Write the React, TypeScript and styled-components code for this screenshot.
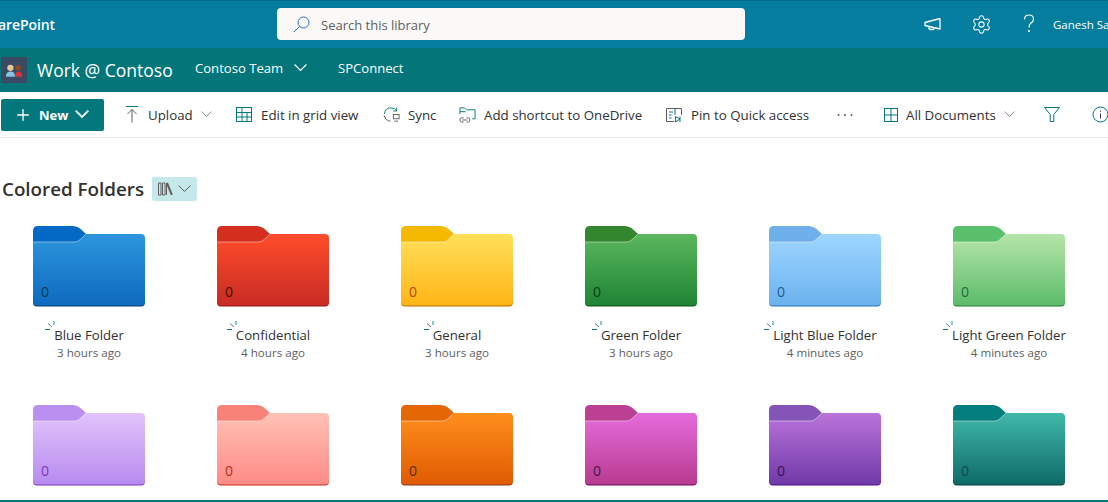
import React from "react";
import styled, { createGlobalStyle } from "styled-components";
import { Plus, Settings } from "lucide-react";

const GlobalStyle = createGlobalStyle`
  html, body {
    margin: 0;
    padding: 0;
    overflow: hidden;
    background: white;
    font-family: "Open Sans", "Noto Sans", "Liberation Sans", sans-serif;
  }
  * { box-sizing: border-box; }
`;

const Page = styled.div`
  display: flex;
  flex-direction: column;
  width: 1108px;
  height: 502px;
  overflow: hidden;
`;
const SuiteBar = styled.header`
  display: flex;
  align-items: center;
  flex: none;
  height: 48px;
  padding-bottom: 1px;
  border-top: 1px solid #086c88;
  background-color: #047d9f;
  color: white;
`;
const Brand = styled.div`
  display: flex;
  justify-content: flex-end;
  flex: none;
  width: 55px;
  overflow: hidden;
  font-size: 14px;
  font-weight: 600;
  letter-spacing: -0.1px;
`;
const SearchBox = styled.div`
  display: flex;
  align-items: center;
  gap: 11px;
  flex: none;
  width: 468px;
  height: 32px;
  margin-left: 222px;
  padding: 1px 0 0 16px;
  border-radius: 4px;
  background-color: #faf9f8;
  color: #605e5c;
  font-size: 13px;
`;
const SuiteActions = styled.div`
  display: grid;
  grid-template-columns: 48px 48px 48px auto;
  justify-items: center;
  align-items: center;
  margin-left: 164px;
  white-space: nowrap;
`;
const UserName = styled.span`
  justify-self: start;
  font-size: 11.5px;
`;
const SiteHeader = styled.nav`
  display: flex;
  align-items: center;
  flex: none;
  height: 44px;
  padding-left: 1px;
  background-color: #04767a;
  color: white;
`;
const SiteLogo = styled.div`
  display: flex;
  justify-content: center;
  align-items: center;
  width: 26px;
  height: 26px;
  background-color: #3a4a62;
`;
const SiteTitle = styled.div`
  margin-left: 10px;
  width: 158px;
  font-size: 17.5px;
  white-space: nowrap;
`;
const NavLink = styled.div<{ $width: number }>`
  display: flex;
  align-items: center;
  gap: 11px;
  width: ${(props) => props.$width}px;
  margin-top: -4px;
  font-size: 13.1px;
  white-space: nowrap;
`;
const CommandBar = styled.div`
  display: grid;
  grid-template-columns: 114px 113px 147px 76px 207px 171px 46px 161px 48px 40px;
  align-items: center;
  flex: none;
  height: 46px;
  padding-left: 1px;
  border-bottom: 1px solid #edebe9;
  background-color: white;
`;
const NewButton = styled.div`
  display: flex;
  align-items: center;
  width: 103px;
  height: 32px;
  padding-left: 13px;
  border-radius: 2px;
  background-color: #03787c;
  color: white;
  font-size: 13px;
  font-weight: 700;
`;
const NewLabel = styled.span`
  margin: 0 7px 0 7px;
`;
const CommandItem = styled.div`
  display: flex;
  align-items: center;
  gap: 8px;
  padding-left: 8px;
  color: #323130;
  font-size: 13.3px;
  white-space: nowrap;
`;
const CommandIcon = styled.span<{ $width?: number }>`
  display: flex;
  justify-content: center;
  flex: none;
  width: ${(props) => props.$width ?? 17}px;
`;
const Content = styled.main`
  flex: 1;
  min-height: 0;
  overflow: hidden;
`;
const SectionHeader = styled.div`
  display: flex;
  align-items: center;
  gap: 8px;
  height: 24px;
  margin: 39px 0 25px;
  padding-left: 2px;
`;
const SectionTitle = styled.h2`
  margin: 0;
  color: #323130;
  font-size: 18.8px;
  font-weight: 600;
  white-space: nowrap;
`;
const ViewPill = styled.div`
  display: flex;
  justify-content: center;
  align-items: center;
  gap: 5px;
  width: 45px;
  height: 24px;
  border-radius: 2px;
  background-color: #c5e9ea;
`;
const FolderGrid = styled.div`
  display: grid;
  grid-template-columns: repeat(6, 178px);
  column-gap: 6px;
  row-gap: 44px;
`;
const Card = styled.div`
  display: flex;
  flex-direction: column;
  align-items: center;
  height: 135px;
`;
const FolderBox = styled.div`
  position: relative;
  width: 112px;
  height: 81px;
`;
const Count = styled.span<{ $color: string }>`
  position: absolute;
  left: 8px;
  bottom: 6px;
  color: ${(props) => props.$color};
  font-size: 14px;
  line-height: 18px;
`;
const Name = styled.div`
  position: relative;
  margin-top: 18px;
  color: #323130;
  font-size: 13.2px;
  line-height: 20px;
  white-space: nowrap;
`;
const NewMark = styled.svg`
  position: absolute;
  left: -9px;
  top: -4px;
`;
const Modified = styled.div`
  color: #605e5c;
  font-size: 11.6px;
  line-height: 16px;
  white-space: nowrap;
`;
const BottomEdge = styled.div`
  flex: none;
  height: 2px;
  background-color: #04767a;
`;

const TEAL = "#03787c";

interface FolderColor {
  name: string;
  time: string;
  tab: string;
  top: string;
  bottom: string;
  edge: string;
  count: string;
}

const folders: FolderColor[] = [
  { name: "Blue Folder", time: "3 hours ago", tab: "#0469c4", top: "#2c96dd", bottom: "#0e6abf", edge: "#06406f", count: "#0b3a5a" },
  { name: "Confidential", time: "4 hours ago", tab: "#d42e1e", top: "#ff4d2a", bottom: "#c82a24", edge: "#8f1414", count: "#3a1208" },
  { name: "General", time: "3 hours ago", tab: "#f5b800", top: "#ffe05a", bottom: "#ffb516", edge: "#b86a00", count: "#b0480a" },
  { name: "Green Folder", time: "3 hours ago", tab: "#33862e", top: "#5bb75d", bottom: "#1f8435", edge: "#0c5016", count: "#0f3a1c" },
  { name: "Light Blue Folder", time: "4 minutes ago", tab: "#6fb0ea", top: "#9ed6ff", bottom: "#6cb2ee", edge: "#2172ba", count: "#1a5d94" },
  { name: "Light Green Folder", time: "4 minutes ago", tab: "#5bc06c", top: "#b5e5a8", bottom: "#5dbc6c", edge: "#1e7a32", count: "#1f6a3a" },
  { name: "Light Purple Folder", time: "4 minutes ago", tab: "#b98ff0", top: "#e2c3fb", bottom: "#b78bee", edge: "#7e34c8", count: "#7e34c8" },
  { name: "Light Red Folder", time: "4 minutes ago", tab: "#f98278", top: "#ffc2b5", bottom: "#ff8b87", edge: "#c8251a", count: "#b4301f" },
  { name: "Orange Folder", time: "3 hours ago", tab: "#e56604", top: "#ff8e1c", bottom: "#e05b03", edge: "#8a3a10", count: "#5c2a10" },
  { name: "Pink Folder", time: "3 hours ago", tab: "#bb3f93", top: "#e56bdc", bottom: "#b83b8f", edge: "#6a0a5a", count: "#3a1b4a" },
  { name: "Purple Folder", time: "3 hours ago", tab: "#8454b8", top: "#ba74da", bottom: "#7039a8", edge: "#4a1098", count: "#3a1050" },
  { name: "Teal Folder", time: "3 hours ago", tab: "#047d7f", top: "#40b8aa", bottom: "#0f6b68", edge: "#05403e", count: "#0a4a48" },
];

const FolderShape = ({ folder, id }: { folder: FolderColor; id: number }) => (
  <svg width="112" height="81" viewBox="0 0 112 81">
    <defs>
      <linearGradient id={`folder-${id}`} x1="0" y1="0" x2="0" y2="1">
        <stop offset="0" stopColor={folder.top} />
        <stop offset="1" stopColor={folder.bottom} />
      </linearGradient>
    </defs>
    <path d="M0 17V5Q0 0 5 0H40Q44 0 47 2.500L53 8V17Z" fill={folder.tab} />
    <path d="M0 70H112V76Q112 80.500 108 80.500H4Q0 80.500 0 76Z" fill={folder.edge} />
    <path
      d="M0 16H41Q44 16 46 14.500L53 8H108Q112 8 112 12V75.500Q112 79.500 108 79.500H4Q0 79.500 0 75.500Z"
      fill={`url(#folder-${id})`}
    />
    <path d="M0 16H41Q44 16 46 14.500L53 8" fill="none" stroke="white" strokeOpacity="0.45" strokeWidth="1" />
  </svg>
);

const Chevron = ({ width, color, weight = 1 }: { width: number; color: string; weight?: number }) => (
  <svg width={width} height={width * 0.58} viewBox="0 0 12 7" fill="none" stroke={color} strokeWidth={(weight * 12) / width}>
    <path d="M0.500 0.500L6 6L11.500 0.500" />
  </svg>
);

const SearchIcon = () => (
  <svg width="17" height="17" viewBox="0 0 17 17" fill="none" stroke="#2b6cc4" strokeWidth="1">
    <circle cx="10.500" cy="6.500" r="5.500" />
    <path d="M6.500 10.500L1 16" />
  </svg>
);
const MegaphoneIcon = () => (
  <svg width="18" height="16" viewBox="0 0 18 16" fill="none" stroke="white" strokeWidth="1.300">
    <path d="M1 6.500L16 2.500V13L1 9.500Z" strokeLinejoin="round" />
    <path d="M5 10.500V12.500Q5 13.500 6.500 13.500H9Q10 13.500 10 12" />
  </svg>
);
const HelpIcon = () => (
  <svg width="12" height="20" viewBox="0 0 12 20" fill="none" stroke="white" strokeWidth="1.200">
    <path d="M1.500 5.500Q1.500 1 6 1Q10.500 1 10.500 5Q10.500 7.500 8 9Q6 10.300 6 13.500" />
    <circle cx="6" cy="17" r="0.500" fill="white" />
  </svg>
);
const TeamLogo = () => (
  <svg width="18" height="15" viewBox="0 0 20 16">
    <path d="M1 15Q1 9 6.500 9Q11 9 11 15Z" fill="#86c5e6" />
    <circle cx="6" cy="5" r="3.500" fill="#e6c79c" />
    <path d="M11 15Q11 9 15 9Q19 9 19 15Z" fill="#d8353a" />
    <circle cx="14.500" cy="5" r="3.200" fill="#8a4a22" />
  </svg>
);
const UploadIcon = () => (
  <svg width="14" height="17" viewBox="0 0 14 17" fill="none" stroke={TEAL} strokeWidth="1">
    <path d="M1 0.500H13" />
    <path d="M7 16.500V3.500M2.500 8L7 3.500L11.500 8" stroke="#605e5c" />
  </svg>
);
const GridIcon = () => (
  <svg width="17" height="17" viewBox="0 0 17 17" fill="none" stroke={TEAL} strokeWidth="1">
    <rect x="0.500" y="1.500" width="15" height="14" />
    <path d="M0.500 6.500H15.500M0.500 11H15.500M6 1.500V15.500M11 6.500V15.500" />
  </svg>
);
const SyncIcon = () => (
  <svg width="18" height="17" viewBox="0 0 18 17" fill="none" stroke={TEAL} strokeWidth="1">
    <path d="M1.500 8Q2 1.500 8.500 1.500Q12.500 1.500 14.500 4.500" />
    <path d="M14.500 1V4.800H11" />
    <path d="M1 9.500L3 12M1.500 10Q3 15.500 8 15.500" stroke="#605e5c" />
    <rect x="11" y="8.500" width="6" height="4.500" stroke="#605e5c" />
    <path d="M12 15.500H16" stroke="#605e5c" />
  </svg>
);
const ShortcutIcon = () => (
  <svg width="18" height="18" viewBox="0 0 18 18" fill="none" stroke={TEAL} strokeWidth="1">
    <path d="M1 8V1.500H6L8 3.500H17V13H14" />
    <path d="M1 5.500H7" />
    <path d="M5 12H2.500Q1 12 1 14Q1 16.500 2.500 16.500H5M8 12H10Q11.500 12 11.500 14Q11.500 16.500 10 16.500H8M3.500 14.300H9" stroke="#605e5c" />
  </svg>
);
const PinIcon = () => (
  <svg width="17" height="16" viewBox="0 0 17 16" fill="none" stroke="#605e5c" strokeWidth="1">
    <path d="M8 14.500H0.500V1.500H15.500V8" />
    <path d="M3 5H7M3 8H5.500M3 11H5.500M9 1.500V8" stroke={TEAL} />
    <path d="M9.500 9.500L14 12L9.500 15ZM14 9.500V15" stroke={TEAL} />
  </svg>
);
const ViewGridIcon = () => (
  <svg width="14" height="14" viewBox="0 0 14 14" fill="none" stroke={TEAL} strokeWidth="1">
    <rect x="0.500" y="0.500" width="13" height="13" />
    <path d="M7 0.500V13.500M0.500 7H13.500" />
  </svg>
);
const FilterIcon = () => (
  <svg width="16" height="15" viewBox="0 0 16 15" fill="none" stroke={TEAL} strokeWidth="1">
    <path d="M0.500 0.500H15.500L9.800 7.500V14.500H6.200V7.500Z" />
  </svg>
);
const InfoIcon = () => (
  <svg width="17" height="17" viewBox="0 0 17 17" fill="none" stroke="#323130" strokeWidth="1">
    <circle cx="8.500" cy="8.500" r="7.500" stroke={TEAL} />
    <path d="M8.500 7.500V12.500M8.500 4.500V5.700" />
  </svg>
);
const DotsIcon = () => (
  <svg width="16" height="4" viewBox="0 0 16 4" fill="#605e5c">
    <circle cx="1.500" cy="2" r="1" />
    <circle cx="8" cy="2" r="1" />
    <circle cx="14.500" cy="2" r="1" />
  </svg>
);
const LibraryIcon = () => (
  <svg width="15" height="14" viewBox="0 0 15 14" fill="none" stroke="#605e5c" strokeWidth="1">
    <path d="M0.500 1H3V13H0.500ZM4.500 1H7V13H4.500ZM8.500 1V13" />
    <path d="M9 1L13.800 12.800" strokeWidth="2" />
  </svg>
);

const App = () => {
  return (
    <Page>
      <GlobalStyle />
      <SuiteBar>
        <Brand>SharePoint</Brand>
        <SearchBox>
          <SearchIcon />
          Search this library
        </SearchBox>
        <SuiteActions>
          <MegaphoneIcon />
          <Settings size={21} color="white" strokeWidth={1.2} />
          <HelpIcon />
          <UserName>Ganesh Sanap</UserName>
        </SuiteActions>
      </SuiteBar>
      <SiteHeader>
        <SiteLogo>
          <TeamLogo />
        </SiteLogo>
        <SiteTitle>Work @ Contoso</SiteTitle>
        <NavLink $width={143}>
          Contoso Team
          <Chevron width={13} color="white" weight={1.2} />
        </NavLink>
        <NavLink $width={90}>SPConnect</NavLink>
      </SiteHeader>
      <CommandBar>
        <NewButton>
          <Plus size={18} color="white" strokeWidth={1.75} />
          <NewLabel>New</NewLabel>
          <Chevron width={14} color="white" weight={1.75} />
        </NewButton>
        <CommandItem>
          <CommandIcon>
            <UploadIcon />
          </CommandIcon>
          Upload
          <Chevron width={11} color="#8a8886" />
        </CommandItem>
        <CommandItem>
          <CommandIcon>
            <GridIcon />
          </CommandIcon>
          Edit in grid view
        </CommandItem>
        <CommandItem>
          <CommandIcon>
            <SyncIcon />
          </CommandIcon>
          Sync
        </CommandItem>
        <CommandItem>
          <CommandIcon>
            <ShortcutIcon />
          </CommandIcon>
          Add shortcut to OneDrive
        </CommandItem>
        <CommandItem>
          <CommandIcon>
            <PinIcon />
          </CommandIcon>
          Pin to Quick access
        </CommandItem>
        <CommandItem>
          <DotsIcon />
        </CommandItem>
        <CommandItem>
          <CommandIcon $width={15}>
            <ViewGridIcon />
          </CommandIcon>
          All Documents
          <Chevron width={11} color="#8a8886" />
        </CommandItem>
        <CommandItem>
          <FilterIcon />
        </CommandItem>
        <CommandItem>
          <InfoIcon />
        </CommandItem>
      </CommandBar>
      <Content>
        <SectionHeader>
          <SectionTitle>Colored Folders</SectionTitle>
          <ViewPill>
            <LibraryIcon />
            <Chevron width={13} color="#605e5c" />
          </ViewPill>
        </SectionHeader>
        <FolderGrid>
          {folders.map((folder, i) => (
            <Card key={folder.name}>
              <FolderBox>
                <FolderShape folder={folder} id={i} />
                <Count $color={folder.count}>0</Count>
              </FolderBox>
              <Name>
                <NewMark width="10" height="10" viewBox="0 0 10 10" fill="none" strokeWidth="1">
                  <path d="M9 0V4" stroke="#0f8fb0" />
                  <path d="M3 2.500L7 6" stroke="#5a7a8a" />
                  <path d="M0 8.500H5" stroke={TEAL} />
                </NewMark>
                {folder.name}
              </Name>
              <Modified>{folder.time}</Modified>
            </Card>
          ))}
        </FolderGrid>
      </Content>
      <BottomEdge />
    </Page>
  );
};

export default App;
